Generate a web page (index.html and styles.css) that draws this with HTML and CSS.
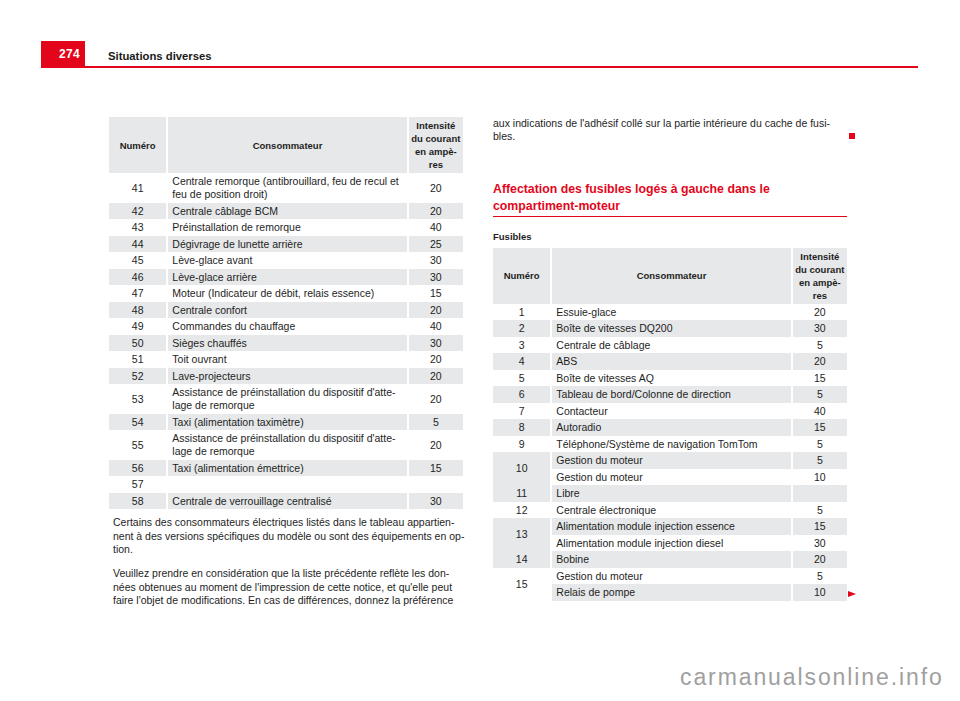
FILE: index.html
```html
<!DOCTYPE html>
<html lang="fr">
<head>
<meta charset="utf-8">
<title>Situations diverses</title>
<link rel="stylesheet" href="styles.css">
</head>
<body>
<div class="page">
  <header class="header">
    <div class="pagenum">274</div>
    <div class="title">Situations diverses</div>
  </header>

  <div class="columns">
    <div class="col">
      <table class="fuses">
        <thead>
          <tr><th class="n">Numéro</th><th class="c">Consommateur</th><th class="a">Intensité<br>du courant<br>en ampè-<br>res</th></tr>
        </thead>
        <tbody>
          <tr><td class="n">41</td><td class="c">Centrale remorque (antibrouillard, feu de recul et<br>feu de position droit)</td><td class="a">20</td></tr>
          <tr class="g"><td class="n">42</td><td class="c">Centrale câblage BCM</td><td class="a">20</td></tr>
          <tr><td class="n">43</td><td class="c">Préinstallation de remorque</td><td class="a">40</td></tr>
          <tr class="g"><td class="n">44</td><td class="c">Dégivrage de lunette arrière</td><td class="a">25</td></tr>
          <tr><td class="n">45</td><td class="c">Lève-glace avant</td><td class="a">30</td></tr>
          <tr class="g"><td class="n">46</td><td class="c">Lève-glace arrière</td><td class="a">30</td></tr>
          <tr><td class="n">47</td><td class="c">Moteur (Indicateur de débit, relais essence)</td><td class="a">15</td></tr>
          <tr class="g"><td class="n">48</td><td class="c">Centrale confort</td><td class="a">20</td></tr>
          <tr><td class="n">49</td><td class="c">Commandes du chauffage</td><td class="a">40</td></tr>
          <tr class="g"><td class="n">50</td><td class="c">Sièges chauffés</td><td class="a">30</td></tr>
          <tr><td class="n">51</td><td class="c">Toit ouvrant</td><td class="a">20</td></tr>
          <tr class="g"><td class="n">52</td><td class="c">Lave-projecteurs</td><td class="a">20</td></tr>
          <tr><td class="n">53</td><td class="c">Assistance de préinstallation du dispositif d'atte-<br>lage de remorque</td><td class="a">20</td></tr>
          <tr class="g"><td class="n">54</td><td class="c">Taxi (alimentation taximètre)</td><td class="a">5</td></tr>
          <tr><td class="n">55</td><td class="c">Assistance de préinstallation du dispositif d'atte-<br>lage de remorque</td><td class="a">20</td></tr>
          <tr class="g"><td class="n">56</td><td class="c">Taxi (alimentation émettrice)</td><td class="a">15</td></tr>
          <tr><td class="n">57</td><td class="c"></td><td class="a"></td></tr>
          <tr class="g"><td class="n">58</td><td class="c">Centrale de verrouillage centralisé</td><td class="a">30</td></tr>
        </tbody>
      </table>
      <p class="text left-text">Certains des consommateurs électriques listés dans le tableau appartien-<br>nent à des versions spécifiques du modèle ou sont des équipements en op-<br>tion.</p>
      <p class="text left-text">Veuillez prendre en considération que la liste précédente reflète les don-<br>nées obtenues au moment de l'impression de cette notice, et qu'elle peut<br>faire l'objet de modifications. En cas de différences, donnez la préférence</p>
    </div>

    <div class="col">
      <p class="text cont">aux indications de l'adhésif collé sur la partie intérieure du cache de fusi-<br>bles.<span class="end-mark"></span></p>
      <h2 class="section">Affectation des fusibles logés à gauche dans le<br>compartiment-moteur</h2>
      <h3 class="sub">Fusibles</h3>
      <div class="tblwrap">
        <table class="fuses">
          <thead>
            <tr><th class="n">Numéro</th><th class="c">Consommateur</th><th class="a">Intensité<br>du courant<br>en ampè-<br>res</th></tr>
          </thead>
          <tbody>
            <tr><td class="n">1</td><td class="c">Essuie-glace</td><td class="a">20</td></tr>
            <tr class="g"><td class="n">2</td><td class="c">Boîte de vitesses DQ200</td><td class="a">30</td></tr>
            <tr><td class="n">3</td><td class="c">Centrale de câblage</td><td class="a">5</td></tr>
            <tr class="g"><td class="n">4</td><td class="c">ABS</td><td class="a">20</td></tr>
            <tr><td class="n">5</td><td class="c">Boîte de vitesses AQ</td><td class="a">15</td></tr>
            <tr class="g"><td class="n">6</td><td class="c">Tableau de bord/Colonne de direction</td><td class="a">5</td></tr>
            <tr><td class="n">7</td><td class="c">Contacteur</td><td class="a">40</td></tr>
            <tr class="g"><td class="n">8</td><td class="c">Autoradio</td><td class="a">15</td></tr>
            <tr><td class="n">9</td><td class="c">Téléphone/Système de navigation TomTom</td><td class="a">5</td></tr>
            <tr class="g"><td class="n" rowspan="2">10</td><td class="c">Gestion du moteur</td><td class="a">5</td></tr>
            <tr><td class="c">Gestion du moteur</td><td class="a">10</td></tr>
            <tr class="g"><td class="n">11</td><td class="c">Libre</td><td class="a"></td></tr>
            <tr><td class="n">12</td><td class="c">Centrale électronique</td><td class="a">5</td></tr>
            <tr class="g"><td class="n" rowspan="2">13</td><td class="c">Alimentation module injection essence</td><td class="a">15</td></tr>
            <tr><td class="c">Alimentation module injection diesel</td><td class="a">30</td></tr>
            <tr class="g"><td class="n">14</td><td class="c">Bobine</td><td class="a">20</td></tr>
            <tr><td class="n" rowspan="2">15</td><td class="c">Gestion du moteur</td><td class="a">5</td></tr>
            <tr class="g"><td class="c">Relais de pompe</td><td class="a">10</td></tr>
          </tbody>
        </table>
        <span class="next-arrow"></span>
      </div>
    </div>
  </div>

  <div class="watermark">carmanualsonline.info</div>
</div>
</body>
</html>
```

FILE: styles.css
```css
html, body {
  margin: 0;
  padding: 0;
  background: #ffffff;
}

body {
  font-family: "Liberation Sans", Arial, sans-serif;
  color: #1e1e1e;
}

.page {
  position: relative;
  width: 960px;
  height: 701px;
  overflow: hidden;
}

/* ---------- Header ---------- */
.header {
  display: flex;
  align-items: flex-end;
  margin: 41px 42px 0 41px;
  height: 25px;
  border-bottom: 2px solid #e3061b;
}

.pagenum {
  width: 44px;
  height: 27px;
  margin-bottom: -2px;
  box-sizing: border-box;
  padding-left: 18px;
  background: #e3061b;
  color: #ffffff;
  font-weight: bold;
  font-size: 12px;
  line-height: 27px;
  letter-spacing: 0.3px;
}

.title {
  margin-left: 23px;
  font-weight: bold;
  font-size: 11.3px;
  line-height: 16px;
  padding-bottom: 2px;
  color: #1a1a1a;
}

/* ---------- Columns ---------- */
.columns {
  display: flex;
  gap: 30px;
  margin: 49px 0 0 109px;
}

.col {
  width: 354px;
}

/* ---------- Tables ---------- */
.fuses {
  width: 354px;
  table-layout: fixed;
  border-collapse: separate;
  border-spacing: 0;
  font-size: 10.5px;
  line-height: 13px;
}

.fuses th,
.fuses td {
  padding: 1.75px 4px;
  vertical-align: middle;
  white-space: nowrap;
}

.fuses .n,
.fuses .c {
  border-right: 2px solid #ffffff;
}

.fuses .n { width: 49px; text-align: center; }
.fuses .c { width: 229px; text-align: left; }
.fuses .a { width: 50px; text-align: center; padding-left: 2px; padding-right: 2px; }

.fuses thead th {
  background: #e6e8e9;
  font-weight: bold;
  font-size: 9.5px;
  line-height: 13px;
  padding-top: 2.2px;
  padding-bottom: 2.2px;
}

.fuses thead th.c { text-align: center; }

.fuses tr.g td {
  background: #e6e8e9;
}

/* ---------- Text ---------- */
.text {
  margin: 0;
  font-size: 10.5px;
  line-height: 13.3px;
  white-space: nowrap;
}

.left-text {
  margin-left: 4px;
}

.left-text:first-of-type {
  margin-top: 7px;
}

.left-text + .left-text {
  margin-top: 11px;
}

.cont {
  position: relative;
}

.end-mark {
  position: absolute;
  left: 356px;
  top: 16px;
  width: 6px;
  height: 6px;
  background: #e3061b;
}

.section {
  margin: 37px 0 0 0;
  padding-bottom: 1px;
  border-bottom: 1.5px solid #e3061b;
  color: #e3061b;
  font-size: 12.3px;
  line-height: 17px;
  font-weight: bold;
  white-space: nowrap;
}

.sub {
  margin: 13px 0 5px 0;
  font-size: 9.5px;
  line-height: 13px;
  font-weight: bold;
}

.tblwrap {
  position: relative;
}

.next-arrow {
  position: absolute;
  left: 355px;
  bottom: 4px;
  width: 0;
  height: 0;
  border-left: 8px solid #e3061b;
  border-top: 3.5px solid transparent;
  border-bottom: 3.5px solid transparent;
}

/* ---------- Watermark ---------- */
.watermark {
  position: absolute;
  left: 680px;
  top: 666px;
  font-family: "Liberation Sans", Arial, sans-serif;
  font-size: 23px;
  line-height: 23px;
  letter-spacing: 1.9px;
  color: #a0a0a0;
}
```
